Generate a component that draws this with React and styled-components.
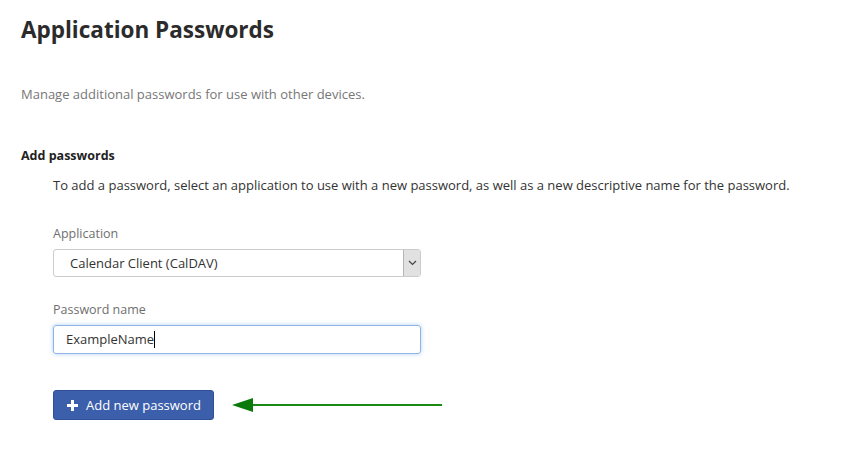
import styled, { createGlobalStyle } from 'styled-components'

const GlobalStyle = createGlobalStyle`
  html, body {
    margin: 0;
    padding: 0;
    background: #fff;
  }
  body {
    font-family: "Open Sans", "Noto Sans", sans-serif;
    color: #333;
  }
`

const Page = styled.div`
  padding: 15px 21px;
  width: 846px;
  height: 467px;
  box-sizing: border-box;
`

const Title = styled.h1`
  margin: 0;
  font-size: 22.5px;
  font-weight: 700;
  color: #2b2b2b;
  line-height: 30px;
`

const Lead = styled.p`
  margin: 39px 0 0;
  font-size: 13px;
  line-height: 20px;
  color: #777;
`

const SectionTitle = styled.h3`
  margin: 42px 0 0;
  font-size: 12.5px;
  font-weight: 700;
  color: #222;
  line-height: 20px;
`

const Section = styled.div`
  padding-left: 32px;
`

const Help = styled.p`
  margin: 9px 0 0;
  font-size: 13px;
  line-height: 20px;
  color: #333;
`

const Field = styled.div`
  margin-top: ${p => p.$top}px;
  display: flex;
  flex-direction: column;
  width: 368px;
`

const Label = styled.label`
  font-size: 12.5px;
  color: #6f6f6f;
  line-height: 18px;
  margin-bottom: 6px;
`

const SelectBox = styled.div`
  display: flex;
  height: 28px;
  border: 1px solid #ccc;
  border-radius: 3px;
  box-sizing: border-box;
  background: #fff;
  overflow: hidden;
`

const SelectText = styled.div`
  flex: 1;
  padding-left: 16px;
  font-size: 13px;
  line-height: 26px;
  color: #333;
`

const SelectArrow = styled.div`
  width: 16px;
  background: #e1e1e1;
  border-left: 1px solid #b5b5b5;
  display: flex;
  align-items: center;
  justify-content: center;
`

const TextInput = styled.div`
  height: 29px;
  border: 1px solid #8fb4e6;
  border-radius: 3px;
  box-sizing: border-box;
  box-shadow: 0 0 4px rgba(102, 160, 233, 0.5);
  padding-left: 12px;
  font-size: 13px;
  line-height: 27px;
  color: #333;
  display: flex;
  align-items: center;
`

const Caret = styled.span`
  display: inline-block;
  width: 1px;
  height: 17px;
  background: #000;
`

const ActionRow = styled.div`
  margin-top: 36px;
  display: flex;
  align-items: center;
  gap: 18px;
`

const Button = styled.button`
  display: flex;
  align-items: center;
  gap: 8px;
  height: 30px;
  width: 161px;
  padding: 0 0 0 13px;
  border: 1px solid #2f5097;
  border-radius: 3px;
  background: #3c5fab;
  color: #fff;
  font-family: inherit;
  font-size: 13px;
  cursor: pointer;
  box-sizing: border-box;
`

const Plus = () => (
  <svg width="11" height="11" viewBox="0 0 11 11">
    <path d="M4 0h3v4h4v3H7v4H4V7H0V4h4z" fill="#fff" />
  </svg>
)

const Chevron = () => (
  <svg width="9" height="6" viewBox="0 0 9 6">
    <path d="M1 1l3.5 3.5L8 1" fill="none" stroke="#444" strokeWidth="1.2" />
  </svg>
)

const Arrow = () => (
  <svg width="212" height="16" viewBox="0 0 212 16">
    <path d="M20 7h190v2H20z" fill="#1a8a12" />
    <path d="M0 8L21 1v14z" fill="#0b7a0b" />
  </svg>
)

export default function App() {
  return (
    <>
      <GlobalStyle />
      <Page>
        <Title>Application Passwords</Title>
        <Lead>Manage additional passwords for use with other devices.</Lead>
        <SectionTitle>Add passwords</SectionTitle>
        <Section>
          <Help>
            To add a password, select an application to use with a new password, as well as a new descriptive name for the password.
          </Help>
          <Field $top={30}>
            <Label>Application</Label>
            <SelectBox>
              <SelectText>Calendar Client (CalDAV)</SelectText>
              <SelectArrow>
                <Chevron />
              </SelectArrow>
            </SelectBox>
          </Field>
          <Field $top={24}>
            <Label>Password name</Label>
            <TextInput>
              ExampleName<Caret />
            </TextInput>
          </Field>
          <ActionRow>
            <Button>
              <Plus />
              Add new password
            </Button>
            <Arrow />
          </ActionRow>
        </Section>
      </Page>
    </>
  )
}
